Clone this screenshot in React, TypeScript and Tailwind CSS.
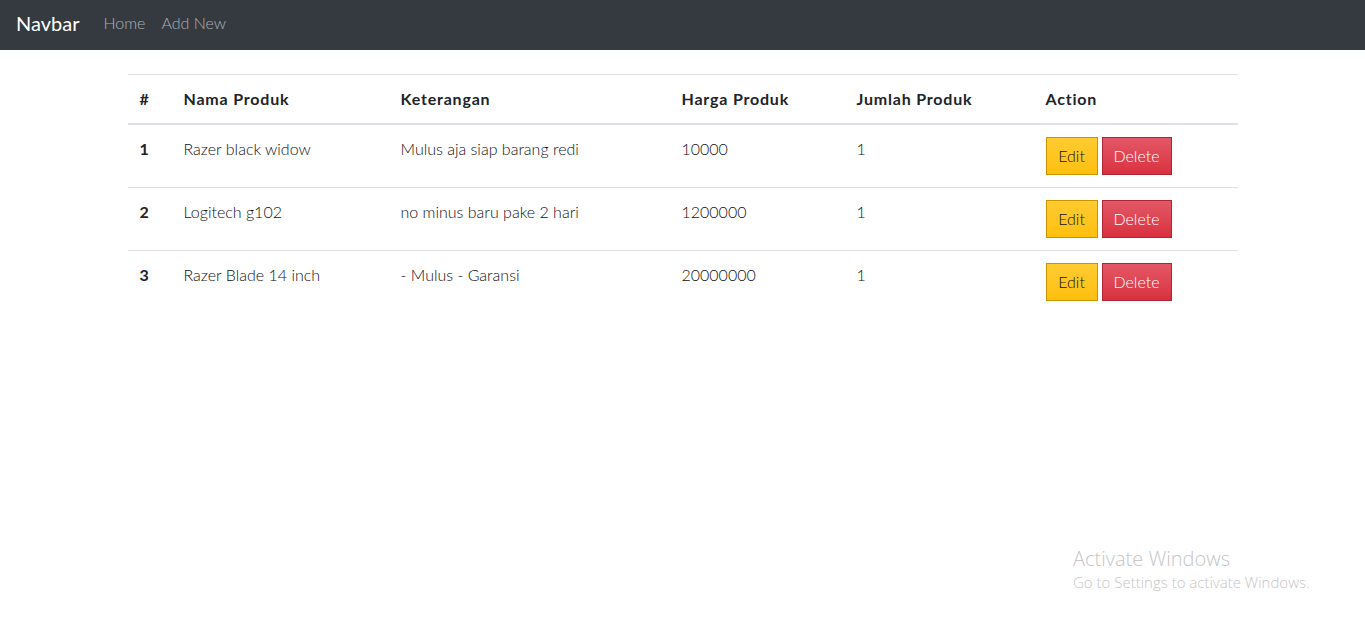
const products = [
  { id: 1, nama: 'Razer black widow', keterangan: 'Mulus aja siap barang redi', harga: 10000, jumlah: 1 },
  { id: 2, nama: 'Logitech g102', keterangan: 'no minus baru pake 2 hari', harga: 1200000, jumlah: 1 },
  { id: 3, nama: 'Razer Blade 14 inch', keterangan: '- Mulus - Garansi', harga: 20000000, jumlah: 1 },
];

export default function App() {
  return (
    <div className="relative min-h-[624px] bg-white text-[#212529] font-['Lato','Open_Sans',sans-serif]">
      {/* Navbar */}
      <nav className="flex h-[50px] items-center bg-[#343a40] px-4 pb-[5px]">
        <span className="mr-6 text-[20px] text-white">Navbar</span>
        <a className="mr-4 text-[16px] font-light text-white/60">Home</a>
        <a className="text-[16px] font-light text-white/60">Add New</a>
      </nav>

      <div className="mx-auto mt-6 w-[1140px] px-[15px]">
        <table className="w-full border-collapse text-left text-[16px]">
          <thead>
            <tr className="border-t border-[#dee2e6] border-b-2">
              <th className="w-[44px] p-3 font-bold tracking-[0.5px]">#</th>
              <th className="w-[217px] p-3 font-bold tracking-[0.8px]">Nama Produk</th>
              <th className="w-[281px] p-3 font-bold tracking-[0.8px]">Keterangan</th>
              <th className="w-[175px] p-3 font-bold tracking-[0.8px]">Harga Produk</th>
              <th className="w-[189px] p-3 font-bold tracking-[0.8px]">Jumlah Produk</th>
              <th className="p-3 font-bold tracking-[0.8px]">Action</th>
            </tr>
          </thead>
          <tbody>
            {products.map((p, i) => (
              <tr key={p.id} className={`align-top ${i > 0 ? 'border-t border-[#dee2e6]' : ''}`}>
                <th className="p-3 font-bold">{p.id}</th>
                <td className="p-3 font-light text-[#111]">{p.nama}</td>
                <td className="p-3 font-light text-[#111]">{p.keterangan}</td>
                <td className="p-3 font-light text-[#111]">{p.harga}</td>
                <td className="p-3 font-light text-[#111]">{p.jumlah}</td>
                <td className="p-3">
                  <div className="flex gap-1">
                    <button className="h-[38px] w-[52px] border border-[#c99400] bg-gradient-to-b from-[#ffcb2f] to-[#ffbf0a] text-[16px] font-light text-[#111]">
                      Edit
                    </button>
                    <button className="h-[38px] w-[70px] border border-[#ad2633] bg-gradient-to-b from-[#e35766] to-[#d9303f] text-[16px] font-light text-white">
                      Delete
                    </button>
                  </div>
                </td>
              </tr>
            ))}
          </tbody>
        </table>
      </div>

      {/* Windows watermark */}
      <div className="absolute left-[1073px] top-[545px] font-['Open_Sans',sans-serif] font-light text-[#c6c6c6]">
        <div className="text-[20px] leading-[27px]">Activate Windows</div>
        <div className="text-[15px] leading-[20px]">Go to Settings to activate Windows.</div>
      </div>
    </div>
  );
}
